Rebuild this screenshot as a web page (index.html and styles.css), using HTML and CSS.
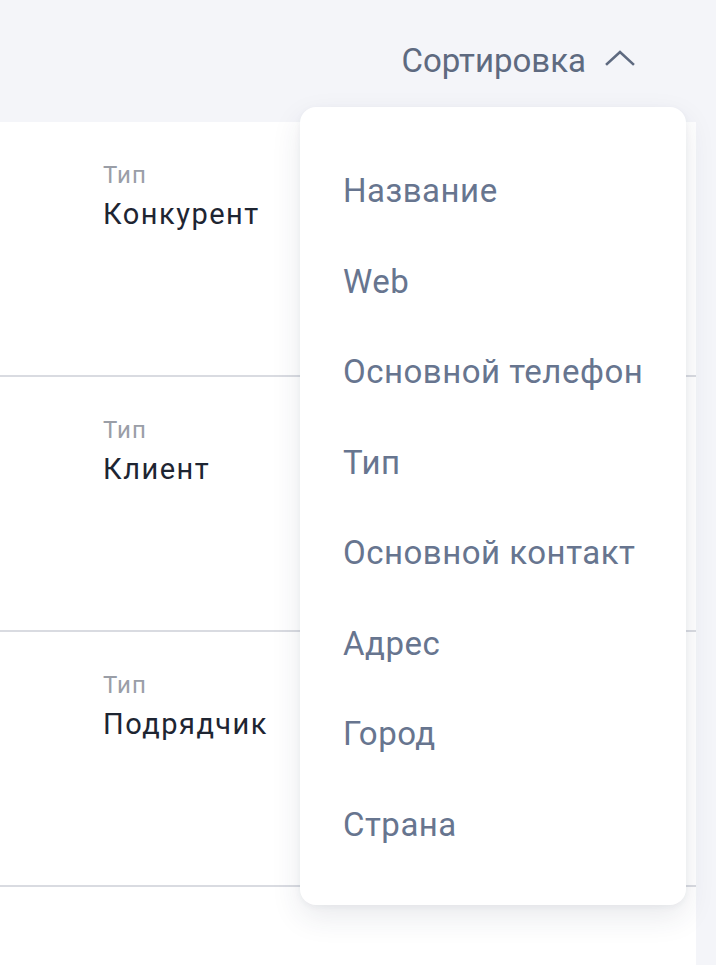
FILE: index.html
```html
<!DOCTYPE html>
<html lang="ru">
<head>
<meta charset="utf-8">
<link rel="stylesheet" href="styles.css">
</head>
<body>
<div class="page">
  <header class="topbar">
    <button class="sort-btn">
      <span class="sort-label">Сортировка</span>
      <svg class="chevron" width="30" height="20" viewBox="0 0 30 20"><path d="M2 16 L15 4 L28 16" fill="none" stroke="#5e6a80" stroke-width="2.6" stroke-linecap="square"/></svg>
    </button>
    <div class="dropdown">
      <div class="dd-item">Название</div>
      <div class="dd-item">Web</div>
      <div class="dd-item">Основной телефон</div>
      <div class="dd-item">Тип</div>
      <div class="dd-item">Основной контакт</div>
      <div class="dd-item">Адрес</div>
      <div class="dd-item">Город</div>
      <div class="dd-item">Страна</div>
    </div>
  </header>
  <main class="list">
    <div class="row">
      <div class="field"><div class="field-label">Тип</div><div class="field-value">Конкурент</div></div>
    </div>
    <div class="row">
      <div class="field"><div class="field-label">Тип</div><div class="field-value">Клиент</div></div>
    </div>
    <div class="row">
      <div class="field"><div class="field-label">Тип</div><div class="field-value">Подрядчик</div></div>
    </div>
    <div class="row last"></div>
  </main>
</div>
</body>
</html>
```
FILE: styles.css
```css
html, body {
  margin: 0;
  padding: 0;
  background: #f4f5f9;
  font-family: Roboto, "Noto Sans", sans-serif;
}
.page {
  width: 716px;
  height: 965px;
  overflow: hidden;
  display: flex;
  flex-direction: column;
}
.topbar {
  position: relative;
  height: 122px;
  flex: none;
  display: flex;
  justify-content: flex-end;
  align-items: center;
  padding-right: 81px;
}
.sort-btn {
  display: flex;
  align-items: center;
  gap: 19px;
  background: none;
  border: none;
  padding: 0;
  margin-top: -2px;
  cursor: pointer;
}
.sort-label {
  font-family: Roboto, sans-serif;
  font-size: 33px;
  color: #5e6a80;
}
.chevron {
  display: block;
  margin-top: -4px;
}
.dropdown {
  position: absolute;
  top: 107px;
  left: 300px;
  width: 386px;
  box-sizing: border-box;
  padding: 39px 0 35px 43px;
  background: #fff;
  border-radius: 16px;
  box-shadow: 0 12px 30px rgba(40, 50, 80, 0.10), 0 2px 6px rgba(40, 50, 80, 0.05);
  z-index: 2;
}
.dd-item {
  height: 90.5px;
  line-height: 90.5px;
  font-size: 33px;
  letter-spacing: 0.5px;
  color: #67758f;
  white-space: nowrap;
}
.list {
  width: 696px;
  flex: 1;
  background: #fff;
}
.row {
  height: 253px;
  border-bottom: 2px solid #d9dbe1;
  box-sizing: content-box;
  padding-left: 103px;
}
.row.last {
  border-bottom: none;
}
.field {
  padding-top: 39px;
}
.field-label {
  font-size: 24px;
  color: #9a9ea7;
  letter-spacing: 1px;
  line-height: 28px;
}
.field-value {
  font-size: 29px;
  color: #1e2532;
  letter-spacing: 1.5px;
  line-height: 34px;
  margin-top: 8px;
}
```
